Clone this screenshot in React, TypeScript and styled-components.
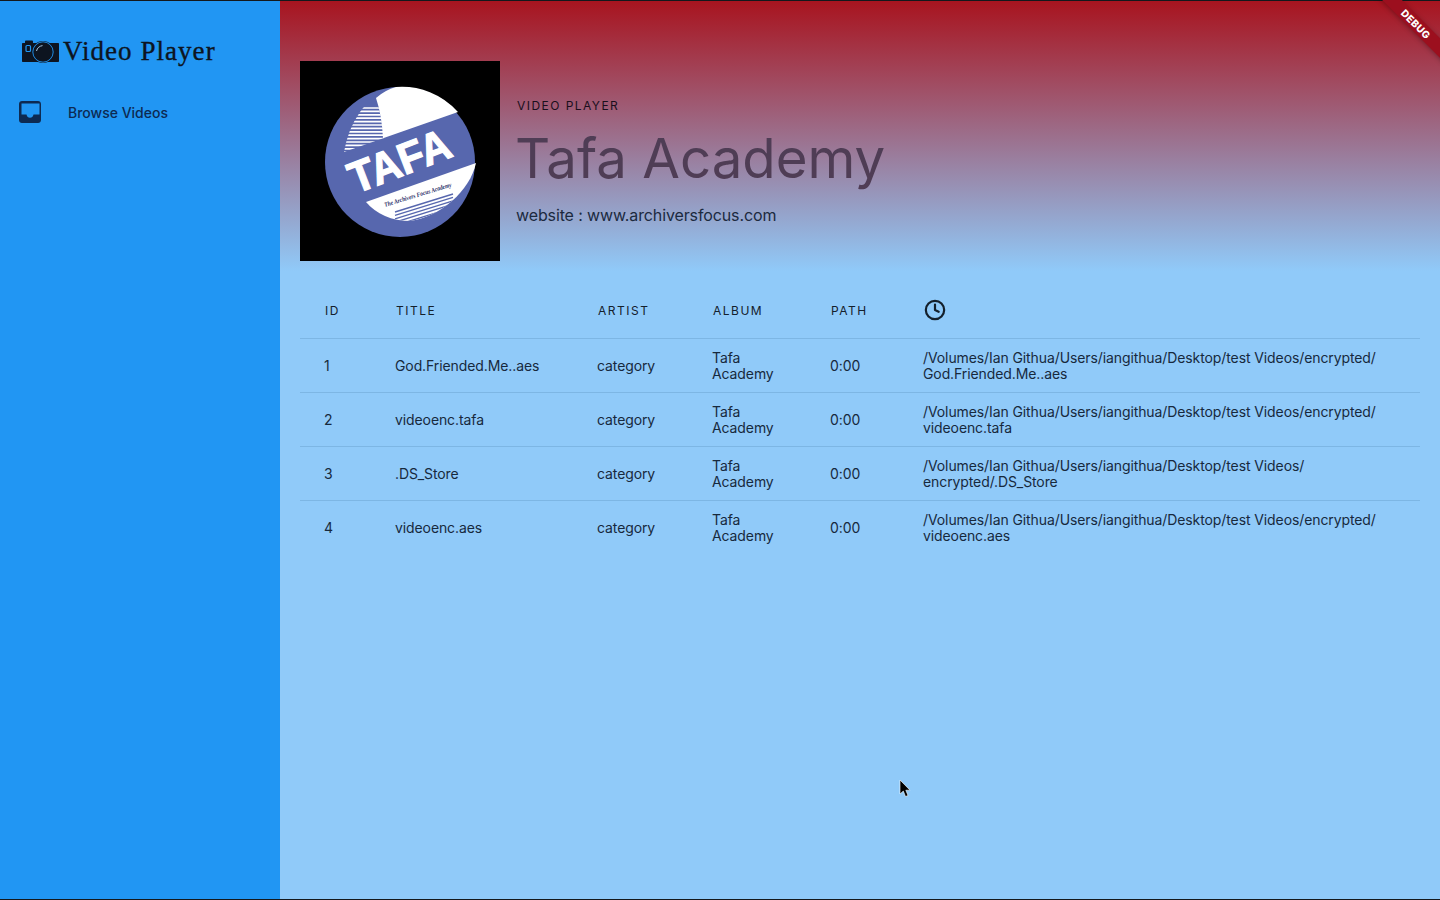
import React from "react";
import styled, { createGlobalStyle } from "styled-components";
import { Clock } from "lucide-react";

const GlobalStyle = createGlobalStyle`
  html, body {
    margin: 0;
    padding: 0;
    height: 100%;
    overflow: hidden;
    background: #90caf9;
    font-family: "Inter", "Liberation Sans", sans-serif;
  }
`;

const tracks = [
  { id: 1, title: "God.Friended.Me..aes", path: ["/Volumes/Ian Githua/Users/iangithua/Desktop/test Videos/encrypted/", "God.Friended.Me..aes"] },
  { id: 2, title: "videoenc.tafa", path: ["/Volumes/Ian Githua/Users/iangithua/Desktop/test Videos/encrypted/", "videoenc.tafa"] },
  { id: 3, title: ".DS_Store", path: ["/Volumes/Ian Githua/Users/iangithua/Desktop/test Videos/", "encrypted/.DS_Store"] },
  { id: 4, title: "videoenc.aes", path: ["/Volumes/Ian Githua/Users/iangithua/Desktop/test Videos/encrypted/", "videoenc.aes"] },
];

const CameraLogo = () => (
  <svg width="38" height="24" viewBox="0 0 38 24">
    <path d="M2 4h2V2.500C4 2 4.500 1.500 5 1.500h6c.5 0 1 .5 1 1V4h25c.6 0 1 .4 1 1v17c0 .6-.4 1-1 1H2c-.6 0-1-.4-1-1V5c0-.6.4-1 1-1z" fill="#0d1420" />
    <rect x="5" y="6.500" width="4.500" height="6" rx="1" fill="none" stroke="#2196f3" strokeWidth="1.200" />
    <circle cx="22" cy="13" r="11" fill="#0d1420" />
    <circle cx="22" cy="13" r="10.200" fill="none" stroke="#2196f3" strokeWidth="0.900" />
    <path d="M15.500 12c.6-3 3-5 6-5.400" fill="none" stroke="#b7d9f5" strokeWidth="0.900" />
  </svg>
);

const InboxIcon = () => (
  <svg width="22" height="22" viewBox="0 0 22 22">
    <path
      fillRule="evenodd"
      d="M3 0h16c1.700 0 3 1.300 3 3v16c0 1.700-1.300 3-3 3H3c-1.700 0-3-1.300-3-3V3c0-1.700 1.300-3 3-3zM2.500 2.500v11h5c.3 2 1.700 3.300 3.500 3.300s3.200-1.300 3.500-3.300h6v-11z"
      fill="#0d2a52"
    />
  </svg>
);

const TafaBadge = () => (
  <svg width="200" height="200" viewBox="0 0 200 200">
    <defs>
      <clipPath id="upperHatch">
        <path d="M44 91 L84 77 Q82 55 76 37 Q66 42 60 51 Q48 68 44 91 Z" />
      </clipPath>
      <clipPath id="lowerCap">
        <path d="M66 141 L176 102 C170 130 140 156 110 160 C92 160 76 153 66 141 Z" />
      </clipPath>
    </defs>
    <rect width="200" height="200" fill="#000" />
    <circle cx="100" cy="101" r="75" fill="#5767ae" />
    <path d="M76 37 Q85 29 96 26 A75 75 0 0 1 158 51 L83 77.300 Q82 55 76 37 Z" fill="#fff" />
    <g clipPath="url(#upperHatch)">
      {Array.from({ length: 14 }, (_, i) => (
        <HatchLine key={i} x1="30" x2="90" y1={47 + i * 3.4} y2={47 + i * 3.4} />
      ))}
    </g>
    <path d="M66 141 L176 102 C170 130 140 156 110 160 C92 160 76 153 66 141 Z" fill="#fff" />
    <g clipPath="url(#lowerCap)">
      {Array.from({ length: 6 }, (_, i) => (
        <LowerHatch key={i} x1="95" x2="153" y1={151 + i * 3.4} y2={133 + i * 3.4} />
      ))}
    </g>
    <TafaWord x="105" y="114" textAnchor="middle" textLength="106" lengthAdjust="spacingAndGlyphs" transform="rotate(-21 105 114)">
      TAFA
    </TafaWord>
    <TagLine x="85" y="146" textLength="70" lengthAdjust="spacingAndGlyphs" transform="rotate(-17 85 146)">
      The Archivers Focus Academy
    </TagLine>
  </svg>
);

const HatchLine = styled.line`
  stroke: #fff;
  stroke-width: 1.7;
`;

const LowerHatch = styled.line`
  stroke: #5767ae;
  stroke-width: 1.4;
`;

const TafaWord = styled.text`
  font-family: "Liberation Sans", sans-serif;
  font-weight: 700;
  font-size: 44px;
  fill: #fff;
  stroke: #fff;
  stroke-width: 1.2px;
`;

const TagLine = styled.text`
  font-family: "Liberation Serif", serif;
  font-style: italic;
  font-weight: 700;
  font-size: 6.500px;
  fill: #1f2d66;
`;

export default function App() {
  return (
    <>
      <GlobalStyle />
      <Page>
        <Sidebar>
          <Brand>
            <CameraLogo />
            <BrandName>Video Player</BrandName>
          </Brand>
          <NavItem>
            <InboxIcon />
            <NavLabel>Browse Videos</NavLabel>
          </NavItem>
        </Sidebar>
        <Main>
          <Hero>
            <TafaBadge />
            <HeroText>
              <Kicker>VIDEO PLAYER</Kicker>
              <HeroTitle>Tafa Academy</HeroTitle>
              <Website>website : www.archiversfocus.com</Website>
            </HeroText>
          </Hero>
          <Table>
            <HeadRow>
              <HeadCell>ID</HeadCell>
              <HeadCell>TITLE</HeadCell>
              <HeadCell>ARTIST</HeadCell>
              <HeadCell>ALBUM</HeadCell>
              <HeadCell>PATH</HeadCell>
              <HeadCell>
                <Clock size={22} strokeWidth={2.4} color="#14202c" />
              </HeadCell>
            </HeadRow>
            {tracks.map((t) => (
              <Row key={t.id}>
                <Cell>{t.id}</Cell>
                <Cell>{t.title}</Cell>
                <Cell>category</Cell>
                <Cell>
                  Tafa
                  <br />
                  Academy
                </Cell>
                <Cell>0:00</Cell>
                <Cell>
                  {t.path[0]}
                  <br />
                  {t.path[1]}
                </Cell>
              </Row>
            ))}
          </Table>
        </Main>
      </Page>
      <DebugBanner>DEBUG</DebugBanner>
      <Pointer viewBox="0 0 12 18" width="12" height="18">
        <path d="M1 0v14l3.300-3 2.200 5.500 2.500-1-2.200-5.300H11z" fill="#000" stroke="#fff" strokeWidth=".6" />
      </Pointer>
    </>
  );
}

const Page = styled.div`
  display: flex;
  width: 1440px;
  height: 900px;
  box-sizing: border-box;
  border-top: 1px solid #14181c;
  border-bottom: 1px solid #14181c;
  overflow: hidden;
`;

const Sidebar = styled.aside`
  width: 280px;
  flex: none;
  background: #2196f3;
  padding: 35px 0 0 19px;
  box-sizing: border-box;
`;

const Brand = styled.div`
  display: flex;
  align-items: center;
  gap: 4px;
  margin-left: 2px;
  height: 30px;
`;

const BrandName = styled.div`
  font-family: "Liberation Serif", serif;
  font-size: 27px;
  color: #0d1420;
  letter-spacing: 1.050px;
  -webkit-text-stroke: 0.35px #0d1420;
`;

const NavItem = styled.div`
  display: flex;
  align-items: center;
  gap: 27px;
  margin-top: 35px;
  height: 22px;
`;

const NavLabel = styled.span`
  font-size: 14px;
  font-weight: 500;
  color: #0d2a52;
`;

const Main = styled.main`
  flex: 1;
  padding: 0 20px;
  background: linear-gradient(180deg, #a8141f 0, #90caf9 270px);
  background-repeat: no-repeat;
`;

const Hero = styled.header`
  display: flex;
  align-items: center;
  gap: 16px;
  padding-top: 60px;
  height: 200px;
`;

const HeroText = styled.div`
  display: flex;
  flex-direction: column;
  padding-top: 1px;
`;

const Kicker = styled.div`
  font-size: 12px;
  letter-spacing: 1.450px;
  color: #1a0f1c;
  margin-left: 1px;
`;

const HeroTitle = styled.h1`
  margin: 12px 0 0 -1px;
  font-size: 54.600px;
  line-height: 66px;
  font-weight: 400;
  color: #4f3d55;
`;

const Website = styled.div`
  margin-top: 14px;
  font-size: 16px;
  letter-spacing: -0.120px;
  color: #1c2a3f;
`;

const Table = styled.div`
  margin-top: 20px;
`;

const HeadRow = styled.div`
  display: grid;
  grid-template-columns: 71px 202px 115px 118px 93px 1fr;
  align-items: center;
  padding: 1px 0 0 25px;
  height: 56px;
  border-bottom: 1px solid #7db6e4;
`;

const HeadCell = styled.div`
  font-size: 12px;
  letter-spacing: 1.500px;
  color: #14202c;
  display: flex;
  align-items: center;
`;

const Row = styled.div`
  display: grid;
  grid-template-columns: 71px 202px 115px 118px 93px 1fr;
  align-items: center;
  padding: 0 0 0 24px;
  height: 53px;
  border-bottom: 1px solid #7db6e4;

  &:last-child {
    border-bottom: none;
  }
`;

const Cell = styled.div`
  font-size: 14px;
  line-height: 16px;
  letter-spacing: -0.100px;
  color: #17293d;
`;

const DebugBanner = styled.div`
  position: absolute;
  top: 0;
  right: 0;
  width: 100px;
  height: 14px;
  transform: translate(26px, 17px) rotate(45deg);
  background: #9c0f1e;
  color: #fff;
  font-size: 10px;
  font-weight: 800;
  line-height: 14px;
  text-align: center;
  letter-spacing: 0.4px;
  box-shadow: 0 1px 5px rgba(0, 0, 0, 0.3);
`;

const Pointer = styled.svg`
  position: absolute;
  left: 899px;
  top: 780px;
`;
